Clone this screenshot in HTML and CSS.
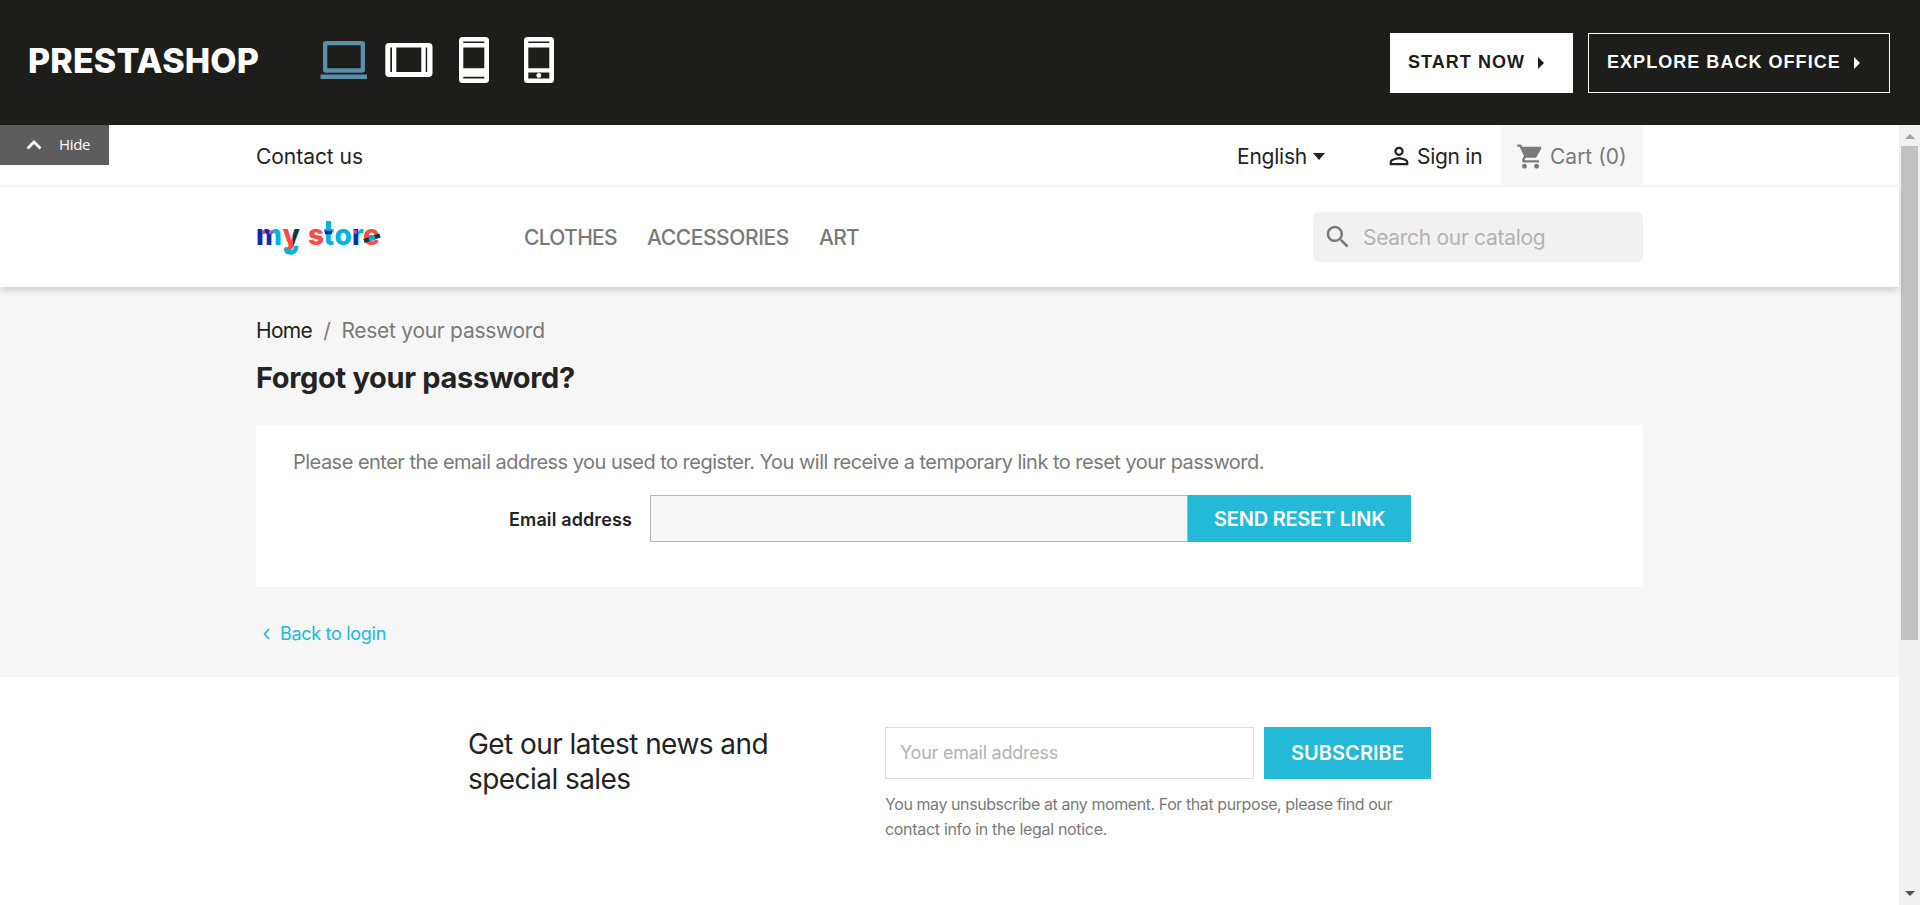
FILE: index.html
```html
<!DOCTYPE html>
<html lang="en">
<head>
<meta charset="utf-8">
<title>Forgot your password?</title>
<link rel="stylesheet" href="styles.css">
</head>
<body>
<header class="demo-bar">
  <div class="demo-brand">PRESTASHOP</div>
  <svg class="devices" viewBox="0 0 240 50" width="240" height="50">
    <path fill="#5b8fa8" fill-rule="evenodd" d="M6 6h36q3 0 3 3v26q0 2.700-3 2.700H6q-3 0-3-2.700V9q0-3 3-3zM7.300 10.300v23h33.400v-23zM.5 39.500h46.500v4.500H.5z"/>
    <g fill="#fff" fill-rule="evenodd">
      <path d="M69 8h39.500q4 0 4 4v26q0 4-4 4H69q-3.700 0-3.700-4V12q0-4 3.700-4zM70.300 12.500V37h1.700V12.500zM76.300 12.500V37h25V12.500zM105.700 12.500V37h1.500V12.500z"/>
      <path d="M142.500 2h23q3.500 0 3.500 3.500v39q0 3.500-3.500 3.500h-23q-3.500 0-3.500-3.500v-39q0-3.500 3.500-3.500zM143.300 6.500V8h21V6.500zM143.300 12.500v20.800h21V12.500zM143.300 41.700v1.800h21v-1.800z"/>
      <path d="M207.500 2h23q3.500 0 3.500 3.500v39q0 3.500-3.500 3.500h-23q-3.500 0-3.500-3.500v-39q0-3.500 3.500-3.500zM208.300 6.500V8h21V6.500zM208.300 12.500v20.800h21V12.500zM208.300 37.500v6h21v-6z"/>
      <circle cx="218.800" cy="40.500" r="2.400"/>
    </g>
  </svg>
  <div class="demo-actions">
    <a class="demo-btn demo-btn-light"><span>START NOW</span><i class="arrow"></i></a>
    <a class="demo-btn"><span>EXPLORE BACK OFFICE</span><i class="arrow"></i></a>
  </div>
</header>
<div class="frame">
  <div class="hide-tab"><svg width="16" height="10" viewBox="0 0 16 10"><path d="M1.500 8.500L8 2l6.500 6.500" fill="none" stroke="#fff" stroke-width="2.800"/></svg><span>Hide</span></div>
  <div class="page">
    <nav class="topnav"><div class="container">
      <a class="contact">Contact us</a>
      <div class="topnav-right">
        <span class="lang">English<i class="caret"></i></span>
        <span class="signin"><svg width="28" height="28" viewBox="0 0 24 24"><path fill="#232323" d="M12 5.900c1.160 0 2.100.94 2.100 2.100s-.94 2.100-2.100 2.100S9.900 9.160 9.900 8s.94-2.100 2.100-2.100m0 9c2.970 0 6.100 1.460 6.100 2.100v1.100H5.900V17c0-.64 3.130-2.100 6.100-2.100M12 4C9.790 4 8 5.790 8 8s1.790 4 4 4 4-1.790 4-4-1.790-4-4-4zm0 9c-2.670 0-8 1.340-8 4v3h16v-3c0-2.660-5.330-4-8-4z"/></svg>Sign in</span>
        <span class="cart"><svg width="29" height="29" viewBox="0 0 24 24"><path fill="#7a7a7a" d="M7 18c-1.100 0-1.990.9-1.990 2S5.900 22 7 22s2-.9 2-2-.9-2-2-2zM1 2v2h2l3.600 7.590-1.350 2.450c-.16.28-.25.61-.25.96 0 1.100.9 2 2 2h12v-2H7.420c-.14 0-.25-.11-.25-.25l.03-.12.900-1.630h7.450c.75 0 1.410-.41 1.750-1.030l3.580-6.490c.08-.14.12-.31.12-.48 0-.55-.45-1-1-1H5.210l-.94-2H1zm16 16c-1.100 0-1.990.9-1.990 2s.89 2 1.990 2 2-.9 2-2-.9-2-2-2z"/></svg>Cart (0)</span>
      </div>
    </div></nav>
    <div class="mainnav"><div class="container">
      <svg class="logo" width="130" height="50" viewBox="0 0 130 50">
        <defs>
          <linearGradient id="gm"><stop offset=".36" stop-color="#0a2da5"/><stop offset=".36" stop-color="#0a2da5"/><stop offset=".62" stop-color="#0a2da5"/><stop offset=".62" stop-color="#00b5e2"/></linearGradient>
          <linearGradient id="gy"><stop offset=".62" stop-color="#ff4a45"/><stop offset=".62" stop-color="#063a45"/></linearGradient>
          <linearGradient id="gr"><stop offset=".48" stop-color="#0a2da5"/><stop offset=".48" stop-color="#00b5e2"/></linearGradient>
        </defs>
        <g class="logo-text"><text x="0" y="33" fill="url(#gm)">m</text><text x="26.500" y="33" fill="url(#gy)">y</text><text x="52" y="33" fill="#ff4a45">s</text><text x="67.500" y="33" fill="#00b5e2">t</text><text x="78.500" y="33" fill="#00b5e2">o</text><text x="96" y="33" fill="url(#gr)">r</text><text x="107" y="33" fill="#ff4a45">e</text></g>
        <path d="M6 20.300h3M13 20.300h4M98 20h3" stroke="#d63fae" stroke-width="3.600"/>
        <path d="M30 36.500q0 4 4.500 4 5 0 6-6.500" fill="none" stroke="#00b5e2" stroke-width="4.500"/>
        <path d="M72.500 15V9" stroke="#00b5e2" stroke-width="5"/>
        <path d="M69 20.500h7" stroke="#1b1fa0" stroke-width="3.500"/>
        <path d="M108 29l16-5.500" stroke="#063a45" stroke-width="4"/><path d="M113 27.300l6-2" stroke="#00b5e2" stroke-width="4"/>
      </svg>
      <div class="menu"><a>CLOTHES</a><a class="wide">ACCESSORIES</a><a>ART</a></div>
      <div class="search"><svg width="30" height="30" viewBox="0 0 24 24"><path fill="#7a7a7a" d="M15.500 14h-.79l-.28-.27C15.410 12.590 16 11.110 16 9.500 16 5.910 13.090 3 9.500 3S3 5.910 3 9.500 5.910 16 9.500 16c1.610 0 3.090-.59 4.230-1.570l.27.28v.79l5 4.990L20.490 19l-4.990-5zm-6 0C7.010 14 5 11.990 5 9.500S7.010 5 9.500 5 14 7.010 14 9.500 11.990 14 9.500 14z"/></svg><span>Search our catalog</span></div>
    </div></div>
    <main class="content">
      <div class="crumbs"><a>Home</a><i>/</i><span>Reset your password</span></div>
      <h1>Forgot your password?</h1>
      <section class="card">
        <p>Please enter the email address you used to register. You will receive a temporary link to reset your password.</p>
        <div class="form-row"><label>Email address</label><div class="field"></div><button class="btn send">SEND RESET LINK</button></div>
      </section>
      <a class="back"><svg width="7" height="12" viewBox="0 0 7 12"><path d="M6 1L1.500 6 6 11" fill="none" stroke="#24b9d7" stroke-width="1.700"/></svg><span>Back to login</span></a>
    </main>
    <footer class="newsletter">
      <p class="news-title">Get our latest news and<br>special sales</p>
      <div class="news-form">
        <div class="news-row"><div class="news-input">Your email address</div><button class="btn subscribe">SUBSCRIBE</button></div>
        <p class="news-note">You may unsubscribe at any moment. For that purpose, please find our<br><span class="note-end">contact info in the legal notice.</span></p>
      </div>
    </footer>
  </div>
  <div class="scrollbar"><i class="sb-up"></i><i class="sb-thumb"></i><i class="sb-down"></i></div>
</div>
</body>
</html>
```
FILE: styles.css
```css
* { box-sizing: border-box; }
body { margin: 0; height: 905px; overflow: hidden; display: flex; flex-direction: column; font-family: Inter, "Liberation Sans", sans-serif; font-size: 21px; color: #232323; background: #fff; }
p, h1 { margin: 0; font-weight: 400; }
.demo-bar { flex: none; height: 125px; padding: 0 30px 0 28px; display: flex; align-items: flex-start; background: #1d1d1b; }
.demo-brand { width: 292px; line-height: 40px; margin-top: 41px; font-size: 34px; font-weight: 800; letter-spacing: .15px; color: #fff; white-space: nowrap; }
.devices { margin-top: 35px; }
.demo-actions { display: flex; gap: 15px; margin: 33px 0 0 auto; font-family: "Liberation Sans", Arial, sans-serif; font-weight: 700; font-size: 18px; letter-spacing: 1.04px; }
.demo-btn { height: 60px; padding: 0 0 0 18px; border: 1px solid #fff; color: #fff; display: flex; align-items: center; gap: 13px; width: 302px; white-space: nowrap; }
.demo-btn-light { width: 183px; padding-left: 17px; background: #fff; color: #1d1d1b; }
.demo-btn span { margin-top: -2px; }
.arrow { border-left: 6px solid currentColor; border-top: 6px solid transparent; border-bottom: 6px solid transparent; }
.frame { position: relative; flex: 1; display: flex; }
.page { width: 1899px; }
.hide-tab { position: absolute; left: 0; top: 0; width: 109px; height: 40px; padding-left: 26px; display: flex; align-items: center; gap: 17px; background: #5d5d5d; color: #fff; font: 15px "Open Sans", sans-serif; letter-spacing: -.36px; }
.hide-tab span { margin-top: -2px; }
.container { width: 1387px; height: 100%; margin-left: 256px; display: flex; align-items: center; }
.topnav { height: 62px; border-bottom: 2px solid #f6f6f6; }
.contact { padding-top: 2px; letter-spacing: -.04px; }
.topnav-right { margin-left: auto; height: 62px; align-self: flex-start; display: flex; align-items: center; }
.topnav-right > span { display: flex; align-items: center; height: 62px; white-space: nowrap; }
.lang { width: 148px; gap: 6px; padding-top: 1px; letter-spacing: -.22px; }
.caret { border-top: 7px solid #232323; border-left: 6px solid transparent; border-right: 6px solid transparent; }
.signin { width: 116px; gap: 4px; letter-spacing: -.28px; }
.cart { width: 142px; padding-left: 15px; gap: 5px; background: #f6f6f6; color: #7a7a7a; }
.mainnav { position: relative; height: 100px; background: #fff; box-shadow: 0 4px 7px -1px rgba(0,0,0,.17); }
.logo { width: 130px; margin-right: 138px; }
.logo-text { font: 800 28px Inter, sans-serif; }
.menu { display: flex; gap: 30px; padding-top: 1px; font-weight: 500; letter-spacing: -.68px; color: #7a7a7a; white-space: nowrap; }
.menu .wide { letter-spacing: -.4px; }
.search { width: 330px; height: 50px; margin-left: auto; padding-left: 10px; display: flex; align-items: center; gap: 10px; border-radius: 6px; background: #f1f1f1; color: #b3b3b3; letter-spacing: -.3px; white-space: nowrap; }
.content { height: 390px; padding: 28px 256px 0; background: #f6f6f6; }
.crumbs { display: flex; gap: 11px; line-height: 32px; letter-spacing: -.28px; color: #7a7a7a; }
.crumbs i { font-style: normal; }
.crumbs a { color: #232323; letter-spacing: -.68px; }
h1 { margin-top: 11px; font-size: 29px; line-height: 40px; font-weight: 700; letter-spacing: -.32px; white-space: nowrap; }
.card { height: 162px; margin-top: 27px; padding: 21px 37px; background: #fff; color: #7a7a7a; }
.card p { font-size: 20px; line-height: 32px; letter-spacing: -.522px; white-space: nowrap; }
.form-row { display: flex; align-items: center; height: 47px; margin-top: 17px; }
label { width: 357px; padding: 1px 18px 0 0; text-align: right; font-size: 18px; font-weight: 600; letter-spacing: .12px; color: #232323; }
.field { width: 538px; height: 47px; border: 1px solid #b5b5b5; background: #f6f6f6; }
.btn { border: 0; padding: 0; background: #24b9d7; color: #fff; font-family: Inter, sans-serif; font-size: 20px; font-weight: 600; white-space: nowrap; }
.send { width: 223px; height: 47px; letter-spacing: -.23px; }
.back { margin: 32px 0 0 7px; display: flex; align-items: center; gap: 10px; line-height: 30px; font-size: 18px; letter-spacing: -.3px; color: #24b9d7; }
.newsletter { padding: 50px 0 0 468px; display: flex; }
.news-title { width: 417px; font-size: 28px; line-height: 35px; letter-spacing: -.56px; }
.news-row { display: flex; gap: 10px; }
.news-input { width: 369px; height: 52px; padding-left: 14px; border: 1px solid #dcdcdc; line-height: 50px; font-size: 18px; letter-spacing: -.24px; color: #b3b3b3; }
.subscribe { width: 167px; height: 52px; letter-spacing: .05px; }
.news-note { margin-top: 13px; font-size: 16px; line-height: 25px; letter-spacing: -.423px; color: #7a7a7a; white-space: nowrap; }
.note-end { letter-spacing: -.31px; }
.scrollbar { width: 21px; background: #f1f1f1; display: flex; flex-direction: column; align-items: center; }
.sb-up { margin: 9px 0 7px; border-bottom: 5px solid #a3a3a3; border-left: 5px solid transparent; border-right: 5px solid transparent; }
.sb-thumb { width: 17px; height: 494px; background: #c1c1c1; }
.sb-down { margin: auto 0 9px; border-top: 5px solid #505050; border-left: 5px solid transparent; border-right: 5px solid transparent; }
```
